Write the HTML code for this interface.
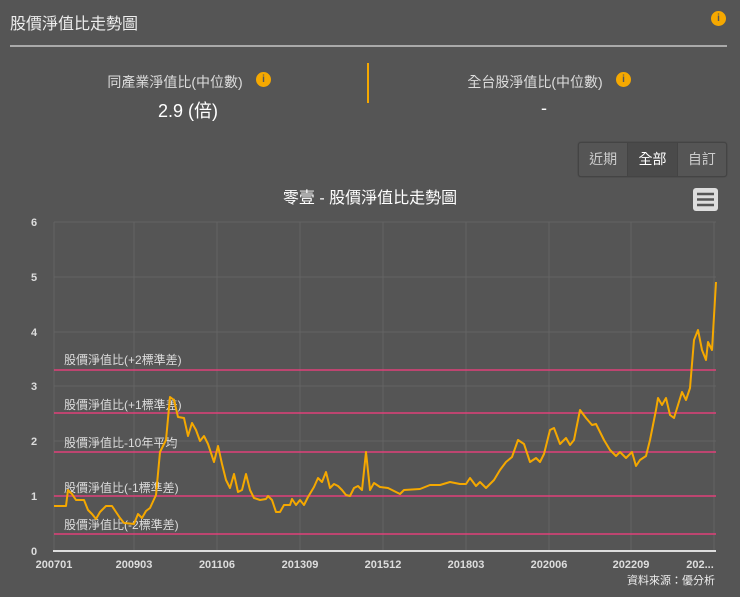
<!DOCTYPE html>
<html><head><meta charset="utf-8"><style>
*{margin:0;padding:0;box-sizing:border-box}
body{width:740px;height:597px;background:#555;font-family:"Liberation Sans","Noto Sans CJK TC",sans-serif;color:#eee;position:relative;overflow:hidden}
.abs{position:absolute}
.info{position:absolute;width:15px;height:15px;border-radius:50%;background:#f5a800;color:#555;font:bold 10px "Liberation Sans",sans-serif;text-align:center;line-height:15px}
.btns{position:absolute;left:578px;top:142px;width:149px;height:35px;border:1px solid #444;border-radius:3px;display:flex;background:#555;box-shadow:0 0 1px #333}
.btns div{flex:1;text-align:center;line-height:33px;font-size:14px;color:#ccc;border-right:1px solid #444}
.btns div:last-child{border-right:none}
.btns .act{background:#4a4a4a;color:#fff}
</style></head><body>
<div class="abs" style="left:10px;top:10px;font-size:16px;color:#eee">股價淨值比走勢圖</div>
<div class="info" style="left:711px;top:11px">i</div>
<div class="abs" style="left:10px;top:45px;width:717px;height:2px;background:#aaa"></div>
<div class="abs" style="left:0;top:72px;width:368px;text-align:center;font-size:14px;color:#ddd">同產業淨值比(中位數) <span style="display:inline-block;width:14px"></span></div>
<div class="info" style="left:256px;top:72px">i</div>
<div class="abs" style="left:0;top:97px;width:376px;text-align:center;font-size:18px;color:#fff">2.9 (倍)</div>
<div class="abs" style="left:367px;top:63px;width:2px;height:40px;background:#f5a800"></div>
<div class="abs" style="left:368px;top:72px;width:352px;text-align:center;font-size:14px;color:#ddd">全台股淨值比(中位數) <span style="display:inline-block;width:14px"></span></div>
<div class="info" style="left:616px;top:72px">i</div>
<div class="abs" style="left:368px;top:98px;width:352px;text-align:center;font-size:18px;color:#fff">-</div>
<div class="btns"><div>近期</div><div class="act">全部</div><div>自訂</div></div>
<div class="abs" style="left:0;top:184px;width:740px;text-align:center;font-size:16px;color:#fff">零壹 - 股價淨值比走勢圖</div>
<svg class="abs" style="left:0;top:0" width="740" height="597">
<rect x="693" y="188" width="25" height="23" rx="3" fill="#ddd"/>
<g stroke="#555" stroke-width="2.5"><line x1="697" y1="194" x2="714" y2="194"/><line x1="697" y1="199.5" x2="714" y2="199.5"/><line x1="697" y1="205" x2="714" y2="205"/></g>
<g stroke="#636363" stroke-width="1">
<line x1="54" y1="222" x2="716" y2="222"/><line x1="54" y1="277" x2="716" y2="277"/><line x1="54" y1="332" x2="716" y2="332"/><line x1="54" y1="386" x2="716" y2="386"/><line x1="54" y1="441" x2="716" y2="441"/><line x1="54" y1="496" x2="716" y2="496"/>
<line x1="54" y1="222" x2="54" y2="551"/><line x1="134" y1="222" x2="134" y2="551"/><line x1="217" y1="222" x2="217" y2="551"/><line x1="300" y1="222" x2="300" y2="551"/><line x1="383" y1="222" x2="383" y2="551"/><line x1="466" y1="222" x2="466" y2="551"/><line x1="549" y1="222" x2="549" y2="551"/><line x1="631" y1="222" x2="631" y2="551"/><line x1="714" y1="222" x2="714" y2="551"/>
</g>
<line x1="53" y1="551" x2="716" y2="551" stroke="#ddd" stroke-width="2"/>
<g stroke="#e0407a" stroke-width="1.5">
<line x1="54" y1="370" x2="716" y2="370"/><line x1="54" y1="413" x2="716" y2="413"/><line x1="54" y1="452" x2="716" y2="452"/><line x1="54" y1="496" x2="716" y2="496"/><line x1="54" y1="534" x2="716" y2="534"/>
</g>
<g font-size="12" fill="#ddd" font-family="Liberation Sans,Noto Sans CJK TC,sans-serif">
<text x="64" y="364">股價淨值比(+2標準差)</text>
<text x="64" y="409">股價淨值比(+1標準差)</text>
<text x="64" y="447">股價淨值比-10年平均</text>
<text x="64" y="492">股價淨值比(-1標準差)</text>
<text x="64" y="529">股價淨值比(-2標準差)</text>
</g>
<g font-size="11" fill="#ddd" font-weight="bold" text-anchor="middle" font-family="Liberation Sans,sans-serif">
<text x="34" y="226">6</text><text x="34" y="281">5</text><text x="34" y="336">4</text><text x="34" y="390">3</text><text x="34" y="445">2</text><text x="34" y="500">1</text><text x="34" y="555">0</text>
<text x="54" y="568">200701</text><text x="134" y="568">200903</text><text x="217" y="568">201106</text><text x="300" y="568">201309</text><text x="383" y="568">201512</text><text x="466" y="568">201803</text><text x="549" y="568">202006</text><text x="631" y="568">202209</text><text x="700" y="568">202...</text>
</g>
<text x="715" y="584" font-size="11" fill="#eee" text-anchor="end" font-family="Liberation Sans,Noto Sans CJK TC,sans-serif">資料來源：優分析</text>
<polyline fill="none" stroke="#f5a800" stroke-width="2" stroke-linejoin="round" points="54,506 66,506 68,490 72,494 76,500 84,500 88,510 92,514 96,519 100,512 106,506 112,506 116,512 120,518 124,523 134,524 138,514 142,518 146,511 150,508 156,495 160,452 166,440 170,397 174,400 178,417 184,418 188,436 192,423 196,430 200,441 204,436 208,444 214,462 218,446 222,464 226,480 230,488 234,474 238,492 242,490 246,474 250,490 254,498 260,500 266,499 268,496 272,500 276,512 280,512 284,505 290,505 292,499 296,505 300,500 304,505 308,497 314,487 318,478 322,482 326,472 330,488 334,484 338,486 342,490 346,495 350,496 354,488 358,486 362,490 366,452 370,490 374,483 380,487 388,488 396,492 400,494 404,490 420,489 430,485 440,485 450,482 460,484 466,484 470,478 476,486 480,482 486,488 494,480 500,470 506,462 512,457 518,440 524,444 530,462 536,458 540,462 544,454 550,430 554,428 560,444 566,438 570,445 574,440 580,410 586,418 592,425 596,424 600,432 604,440 610,450 616,456 620,452 626,458 632,452 636,466 640,460 646,456 650,440 656,410 658,398 662,405 666,398 670,415 674,418 678,405 682,392 686,400 690,388 694,340 698,330 702,350 706,360 708,342 712,350 716,282"/>
</svg>
</body></html>
